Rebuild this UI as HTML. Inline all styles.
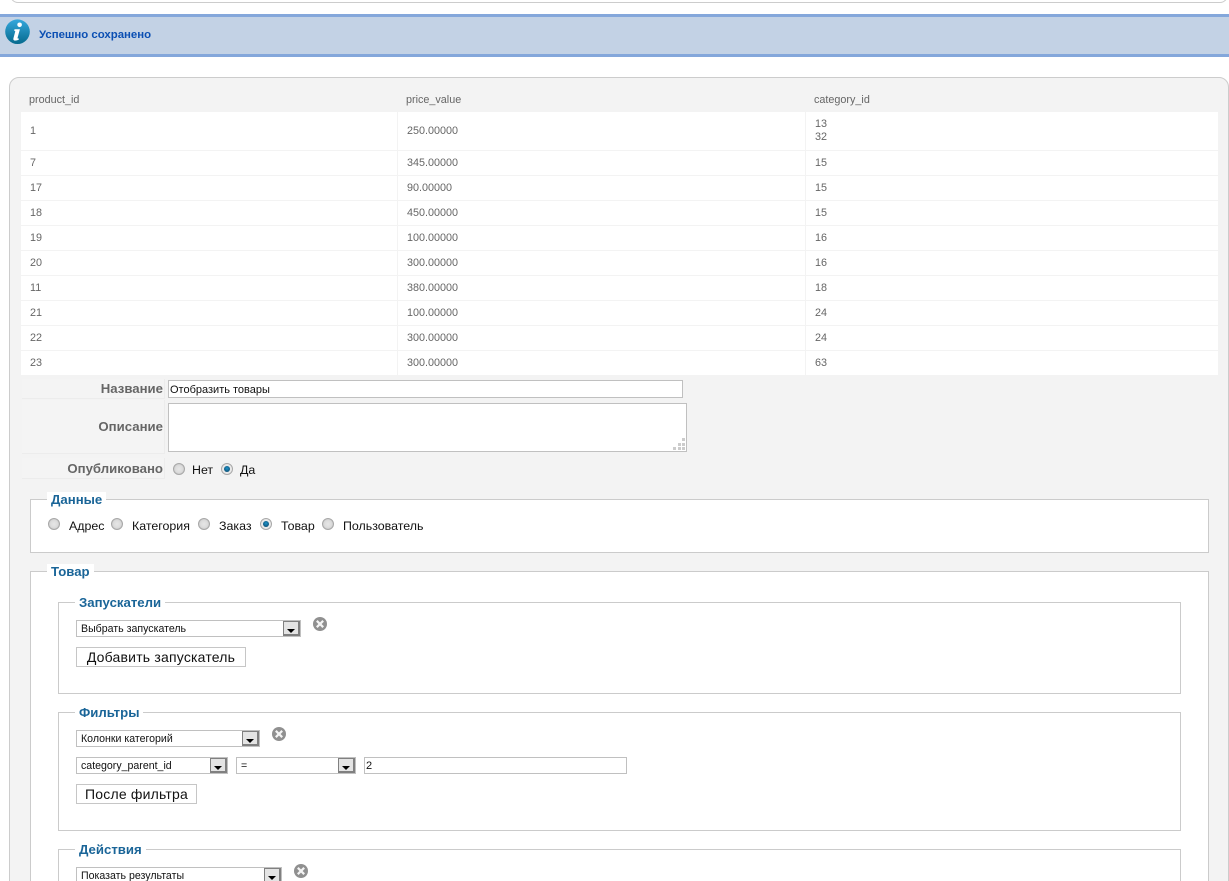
<!DOCTYPE html>
<html><head><meta charset="utf-8">
<style>
html,body{margin:0;padding:0;background:#fff;width:1229px;height:881px;overflow:hidden}
body{position:relative;font-family:"Liberation Sans",sans-serif;font-size:11px;color:#666}
div,span.a{position:absolute;box-sizing:border-box}
.t{white-space:nowrap;line-height:14px}
.cell{color:#666;font-size:10.8px;white-space:nowrap;line-height:13px;margin-top:1px}
.hl{left:21px;width:1197px;height:1px;background:#f3f3f3}
.lab{background:#f4f4f4;border-bottom:1px solid #ececec;border-right:1px solid #ececec;left:22px;width:143px;text-align:right;padding-right:1px;font-weight:bold;font-size:13.2px;color:#666;white-space:nowrap}
.fs{border:1px solid #cbcbcb;background:#fff}
.lg{background:#fff;color:#1a6598;font-weight:bold;font-size:13.2px;line-height:16px;padding:0 4px;white-space:nowrap;margin-top:1px}
.blk{color:#111;font-size:12.4px;line-height:14px;white-space:nowrap}
.inp{background:#fff;border:1px solid #c0c0c0;color:#111;font-size:11px;white-space:nowrap;padding-left:4px}
.sel{background:#fff;border:1px solid #c0c0c0;height:17px;color:#111;font-size:10.6px;line-height:16px;padding-left:4px;white-space:nowrap}
.ar{top:0;right:0;width:17px;height:15px;background:#e4e4e4;border:2px solid #808080;border-left-width:1px;border-top-width:1px}
.ar:after{content:"";position:absolute;left:3px;top:7px;border-left:4px solid transparent;border-right:4px solid transparent;border-top:4px solid #000}
.btn{background:#fff;border:1px solid #c6c6c6;height:20px;color:#111;font-size:14px;letter-spacing:.2px;line-height:19px;text-align:center;white-space:nowrap}
.r{width:12px;height:12px;border-radius:50%;border:1px solid #a8a8a8;background:radial-gradient(circle at 50% 50%,#e6e6e6 0,#dcdcdc 50%,#b8b8b8 100%)}
.r.on{background:#e9e9e9}
.r.on:after{content:"";position:absolute;left:2px;top:2px;width:6px;height:6px;border-radius:50%;background:radial-gradient(circle at 50% 40%,#1f93c8,#063c5e)}
</style></head><body>

<div style="left:10px;top:-20px;width:1218px;height:23px;border:1px solid #ccc;border-radius:8px;background:#fff"></div>

<div style="left:0;top:14px;width:1229px;height:43px;background:#c3d2e5;border-top:3px solid #84a7db;border-bottom:3px solid #84a7db"></div>
<svg style="position:absolute;left:5px;top:19px" width="25" height="26" viewBox="0 0 25 26">
<defs><linearGradient id="g" x1="0" y1="0" x2="0" y2="1"><stop offset="0" stop-color="#35a7dc"/><stop offset="1" stop-color="#066a8e"/></linearGradient></defs>
<circle cx="12.5" cy="12.7" r="12.3" fill="url(#g)"/>
<circle cx="14.6" cy="5.8" r="2.3" fill="#fff"/>
<path d="M9.5 10.2 H14.9 L12.6 18.6 Q12.3 20 13.9 19.4 L13.7 20.8 Q12 21.6 9.9 21.6 Q7.9 21.4 8.4 19.4 L10.3 12.2 L9.2 11.8 Z" fill="#fff"/>
</svg>
<div class="t" style="left:39px;top:28px;color:#0b4fb3;font-weight:bold;font-size:11.4px">Успешно сохранено</div>

<div style="left:9px;top:77px;width:1220px;height:830px;background:#f3f3f3;border:1px solid #ccc;border-radius:10px"></div>

<div style="left:21px;top:112px;width:1197px;height:263px;background:#fff"></div>
<div style="left:397px;top:112px;width:1px;height:263px;background:#f3f3f3"></div>
<div style="left:805px;top:112px;width:1px;height:263px;background:#f3f3f3"></div>
<div class="hl" style="top:150px"></div><div class="hl" style="top:175px"></div><div class="hl" style="top:200px"></div><div class="hl" style="top:225px"></div><div class="hl" style="top:250px"></div><div class="hl" style="top:275px"></div><div class="hl" style="top:300px"></div><div class="hl" style="top:325px"></div><div class="hl" style="top:350px"></div>

<div class="cell" style="left:29px;top:93px">product_id</div><div class="cell" style="left:406px;top:93px">price_value</div><div class="cell" style="left:814px;top:93px">category_id</div>
<div class="cell" style="left:30px;top:124px">1</div><div class="cell" style="left:407px;top:124px">250.00000</div><div class="cell" style="left:815px;top:117px">13<br>32</div>
<div class="cell" style="left:30px;top:156px">7</div><div class="cell" style="left:407px;top:156px">345.00000</div><div class="cell" style="left:815px;top:156px">15</div>
<div class="cell" style="left:30px;top:181px">17</div><div class="cell" style="left:407px;top:181px">90.00000</div><div class="cell" style="left:815px;top:181px">15</div>
<div class="cell" style="left:30px;top:206px">18</div><div class="cell" style="left:407px;top:206px">450.00000</div><div class="cell" style="left:815px;top:206px">15</div>
<div class="cell" style="left:30px;top:231px">19</div><div class="cell" style="left:407px;top:231px">100.00000</div><div class="cell" style="left:815px;top:231px">16</div>
<div class="cell" style="left:30px;top:256px">20</div><div class="cell" style="left:407px;top:256px">300.00000</div><div class="cell" style="left:815px;top:256px">16</div>
<div class="cell" style="left:30px;top:281px">11</div><div class="cell" style="left:407px;top:281px">380.00000</div><div class="cell" style="left:815px;top:281px">18</div>
<div class="cell" style="left:30px;top:306px">21</div><div class="cell" style="left:407px;top:306px">100.00000</div><div class="cell" style="left:815px;top:306px">24</div>
<div class="cell" style="left:30px;top:331px">22</div><div class="cell" style="left:407px;top:331px">300.00000</div><div class="cell" style="left:815px;top:331px">24</div>
<div class="cell" style="left:30px;top:356px">23</div><div class="cell" style="left:407px;top:356px">300.00000</div><div class="cell" style="left:815px;top:356px">63</div>

<div class="lab" style="top:379px;height:20px;line-height:19px">Название</div>
<div class="inp" style="left:168px;top:380px;width:515px;height:18px;line-height:18px;padding-left:1px">Отобразить товары</div>
<div class="lab" style="top:400px;height:54px;line-height:53px">Описание</div>
<div style="left:168px;top:403px;width:519px;height:49px;background:#fff;border:1px solid #c0c0c0"></div>
<svg style="position:absolute;left:671px;top:438px" width="15" height="13"><g fill="#cccccc"><rect x="2" y="9" width="3" height="3"/><rect x="7" y="9" width="3" height="3"/><rect x="11" y="9" width="3" height="3"/><rect x="7" y="5" width="3" height="3"/><rect x="11" y="5" width="3" height="3"/><rect x="11" y="0" width="3" height="3"/></g></svg>
<div class="lab" style="top:458px;height:21px;line-height:21px">Опубликовано</div>
<div class="r" style="left:173px;top:463px"></div><div class="blk" style="left:192px;top:463px">Нет</div>
<div class="r on" style="left:221px;top:463px"></div><div class="blk" style="left:240px;top:463px">Да</div>

<div class="fs" style="left:30px;top:499px;width:1179px;height:54px"></div>
<div class="lg" style="left:47px;top:491px">Данные</div>
<div class="r" style="left:48px;top:518px"></div><div class="blk" style="left:69px;top:519px">Адрес</div>
<div class="r" style="left:111px;top:518px"></div><div class="blk" style="left:132px;top:519px">Категория</div>
<div class="r" style="left:198px;top:518px"></div><div class="blk" style="left:219px;top:519px">Заказ</div>
<div class="r on" style="left:260px;top:518px"></div><div class="blk" style="left:281px;top:519px">Товар</div>
<div class="r" style="left:322px;top:518px"></div><div class="blk" style="left:343px;top:519px">Пользователь</div>

<div class="fs" style="left:30px;top:571px;width:1179px;height:340px"></div>
<div class="lg" style="left:47px;top:563px">Товар</div>

<div class="fs" style="left:58px;top:602px;width:1123px;height:92px"></div>
<div class="lg" style="left:75px;top:594px">Запускатели</div>
<div class="sel" style="left:76px;top:620px;width:225px">Выбрать запускатель<div class="ar"></div></div>
<svg style="position:absolute;left:313px;top:617px" width="14" height="14"><circle cx="7" cy="7" r="7" fill="#909090"/><path d="M3.8 3.8 L10.2 10.2 M10.2 3.8 L3.8 10.2" stroke="#f4f4f4" stroke-width="2.2"/></svg>
<div class="btn" style="left:76px;top:647px;width:170px">Добавить запускатель</div>

<div class="fs" style="left:58px;top:712px;width:1123px;height:119px"></div>
<div class="lg" style="left:75px;top:704px">Фильтры</div>
<div class="sel" style="left:76px;top:730px;width:184px">Колонки категорий<div class="ar"></div></div>
<svg style="position:absolute;left:272px;top:727px" width="14" height="14"><circle cx="7" cy="7" r="7" fill="#909090"/><path d="M3.8 3.8 L10.2 10.2 M10.2 3.8 L3.8 10.2" stroke="#f4f4f4" stroke-width="2.2"/></svg>
<div class="sel" style="left:76px;top:757px;width:152px">category_parent_id<div class="ar"></div></div>
<div class="sel" style="left:236px;top:757px;width:120px">=<div class="ar"></div></div>
<div class="inp" style="left:364px;top:757px;width:263px;height:17px;line-height:16px;padding-left:1px">2</div>
<div class="btn" style="left:76px;top:784px;width:121px">После фильтра</div>

<div class="fs" style="left:58px;top:849px;width:1123px;height:60px"></div>
<div class="lg" style="left:75px;top:841px">Действия</div>
<div class="sel" style="left:76px;top:867px;width:206px">Показать результаты<div class="ar"></div></div>
<svg style="position:absolute;left:294px;top:864px" width="14" height="14"><circle cx="7" cy="7" r="7" fill="#909090"/><path d="M3.8 3.8 L10.2 10.2 M10.2 3.8 L3.8 10.2" stroke="#f4f4f4" stroke-width="2.2"/></svg>

</body></html>
